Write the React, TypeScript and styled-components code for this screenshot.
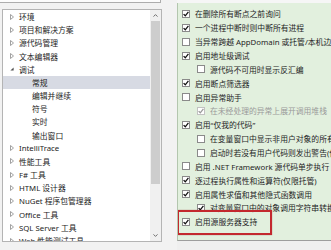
import React from "react";
import styled, { createGlobalStyle, css } from "styled-components";

const Global = createGlobalStyle`
  html, body { margin: 0; padding: 0; background: #f2f2f2; }
  #root { width: 331px; height: 250px; }
`;

const Window = styled.div`
  width: 331px;
  height: 250px;
  overflow: hidden;
  display: flex;
  background: #f2f2f2;
  font-family: "Noto Sans", "Noto Sans CJK SC", sans-serif;
  font-size: 7.8px;
  color: #1e1e1e;
`;

const LeftPane = styled.div`
  width: 162px;
  flex-shrink: 0;
  display: flex;
  flex-direction: column;
`;

const SearchBox = styled.div`
  height: 2px;
  background: #fcfcfc;
  border: 1px solid #adadad;
  border-top: none;
  border-left: none;
  margin-right: 1px;
`;

const Tree = styled.div`
  margin-top: 6px;
  margin-left: 2px;
  height: 231px;
  border: 1px solid #b4b4b4;
  background: #ffffff;
  display: flex;
  overflow: hidden;
`;

const TreeList = styled.div`
  flex: 1;
  display: flex;
  flex-direction: column;
  overflow: hidden;
`;

const TreeRow = styled.div<{ $level: number; $selected?: boolean }>`
  height: 13.18px;
  flex-shrink: 0;
  display: flex;
  align-items: center;
  padding-left: ${(p) => 7 + p.$level * 13}px;
  white-space: nowrap;
  color: #1c1c1c;
  background: ${(p) => (p.$selected ? "#d7dae3" : "transparent")};
`;

const Expander = styled.span`
  width: 9px;
  flex-shrink: 0;
  display: flex;
  align-items: center;
`;

const ScrollBar = styled.div`
  width: 11px;
  flex-shrink: 0;
  background: #f0f0f0;
  display: flex;
  flex-direction: column;
  align-items: center;
`;

const ScrollArrow = styled.div`
  height: 11px;
  width: 100%;
  display: flex;
  align-items: center;
  justify-content: center;
  flex-shrink: 0;
`;

const ScrollThumb = styled.div`
  width: 9px;
  height: 163px;
  background: #cdcdcd;
  flex-shrink: 0;
`;

const ScrollSpacer = styled.div`
  flex: 1;
`;

const RightPane = styled.div`
  margin-left: 15px;
  flex: 1;
  padding-top: 3px;
  background: #f6f6f6;
  display: flex;
  flex-direction: column;
`;

const OptionsPanel = styled.div`
  height: 233px;
  background: #e2f0de;
  border-left: 1px solid #b3c6ae;
  border-bottom: 1px solid #9d9d9d;
  padding-top: 4px;
  display: flex;
  flex-direction: column;
  overflow: hidden;
`;

const BottomStrip = styled.div`
  flex: 1;
  background: #efefef;
`;

const OptionRow = styled.div<{ $level: number; $disabled?: boolean; $highlight?: boolean }>`
  position: relative;
  height: 13.87px;
  flex-shrink: 0;
  display: flex;
  align-items: center;
  gap: 5px;
  padding-left: ${(p) => 4 + p.$level * 15}px;
  white-space: nowrap;
  color: ${(p) => (p.$disabled ? "#9a9a9a" : "#1e1e1e")};
  ${(p) =>
    p.$highlight &&
    css`
      &::after {
        content: "";
        position: absolute;
        left: -1px;
        top: -5px;
        width: 91px;
        height: 21px;
        border: 2.5px solid #c3282e;
        box-shadow: 0 0 1px rgba(120, 0, 0, 0.5);
      }
    `}
`;

const Box = styled.span<{ $disabled?: boolean }>`
  width: 8px;
  height: 8px;
  box-sizing: border-box;
  flex-shrink: 0;
  border: 1px solid ${(p) => (p.$disabled ? "#c2c2c2" : "#8a8a8a")};
  background: #ffffff;
  display: flex;
  align-items: center;
  justify-content: center;
`;

const Collapsed = () => (
  <svg width="4" height="6" viewBox="0 0 4 6">
    <path d="M0.5 0.5 L3.5 3 L0.5 5.5 Z" fill="none" stroke="#8a8a8a" strokeWidth="0.8" />
  </svg>
);

const Expanded = () => (
  <svg width="4" height="4" viewBox="0 0 4 4">
    <path d="M3.6 0.4 L3.6 3.6 L0.4 3.6 Z" fill="#505050" />
  </svg>
);

const Check = ({ disabled }: { disabled?: boolean }) => (
  <svg width="6" height="6" viewBox="0 0 6 6">
    <path
      d="M0.6 3.1 L2.3 4.8 L5.4 0.9"
      fill="none"
      stroke={disabled ? "#9a9a9a" : "#111"}
      strokeWidth="1.3"
    />
  </svg>
);

const Chevron = ({ up }: { up?: boolean }) => (
  <svg width="5" height="3" viewBox="0 0 5 3">
    <path
      d={up ? "M0.5 2.6 L2.5 0.6 L4.5 2.6" : "M0.5 0.4 L2.5 2.4 L4.5 0.4"}
      fill="none"
      stroke="#606060"
      strokeWidth="0.9"
    />
  </svg>
);

type TreeItem = { label: string; level: number; state?: "collapsed" | "expanded"; selected?: boolean };

const treeItems: TreeItem[] = [
  { label: "环境", level: 0, state: "collapsed" },
  { label: "项目和解决方案", level: 0, state: "collapsed" },
  { label: "源代码管理", level: 0, state: "collapsed" },
  { label: "文本编辑器", level: 0, state: "collapsed" },
  { label: "调试", level: 0, state: "expanded" },
  { label: "常规", level: 1, selected: true },
  { label: "编辑并继续", level: 1 },
  { label: "符号", level: 1 },
  { label: "实时", level: 1 },
  { label: "输出窗口", level: 1 },
  { label: "IntelliTrace", level: 0, state: "collapsed" },
  { label: "性能工具", level: 0, state: "collapsed" },
  { label: "F# 工具", level: 0, state: "collapsed" },
  { label: "HTML 设计器", level: 0, state: "collapsed" },
  { label: "NuGet 程序包管理器", level: 0, state: "collapsed" },
  { label: "Office 工具", level: 0, state: "collapsed" },
  { label: "SQL Server 工具", level: 0, state: "collapsed" },
  { label: "Web 性能测试工具", level: 0, state: "collapsed" },
];

type Option = { label: string; level: number; checked: boolean; disabled?: boolean; highlight?: boolean };

const options: Option[] = [
  { label: "在删除所有断点之前询问", level: 0, checked: true },
  { label: "一个进程中断时则中断所有进程", level: 0, checked: true },
  { label: "当异常跨越 AppDomain 或托管/本机边界时中断", level: 0, checked: false },
  { label: "启用地址级调试", level: 0, checked: true },
  { label: "源代码不可用时显示反汇编", level: 1, checked: false },
  { label: "启用断点筛选器", level: 0, checked: true },
  { label: "启用异常助手", level: 0, checked: false },
  { label: "在未经处理的异常上展开调用堆栈", level: 1, checked: true, disabled: true },
  { label: "启用“仅我的代码”", level: 0, checked: true },
  { label: "在变量窗口中显示非用户对象的所有成员", level: 1, checked: false },
  { label: "启动时若没有用户代码则发出警告(仅限托管)", level: 1, checked: false },
  { label: "启用 .NET Framework 源代码单步执行", level: 0, checked: false },
  { label: "逐过程执行属性和运算符(仅限托管)", level: 0, checked: true },
  { label: "启用属性求值和其他隐式函数调用", level: 0, checked: true },
  { label: "对变量窗口中的对象调用字符串转换函数", level: 1, checked: true },
  { label: "启用源服务器支持", level: 0, checked: true, highlight: true },
];

export default function App() {
  return (
    <>
      <Global />
      <Window>
        <LeftPane>
          <SearchBox />
          <Tree>
            <TreeList>
              {treeItems.map((t) => (
                <TreeRow key={t.label} $level={t.level} $selected={t.selected}>
                  <Expander>
                    {t.state === "collapsed" && <Collapsed />}
                    {t.state === "expanded" && <Expanded />}
                  </Expander>
                  {t.label}
                </TreeRow>
              ))}
            </TreeList>
            <ScrollBar>
              <ScrollArrow>
                <Chevron up />
              </ScrollArrow>
              <ScrollThumb />
              <ScrollSpacer />
              <ScrollArrow>
                <Chevron />
              </ScrollArrow>
            </ScrollBar>
          </Tree>
        </LeftPane>
        <RightPane>
          <OptionsPanel>
            {options.map((o) => (
              <OptionRow key={o.label} $level={o.level} $disabled={o.disabled} $highlight={o.highlight}>
                <Box $disabled={o.disabled}>{o.checked && <Check disabled={o.disabled} />}</Box>
                {o.label}
              </OptionRow>
            ))}
          </OptionsPanel>
          <BottomStrip />
        </RightPane>
      </Window>
    </>
  );
}
